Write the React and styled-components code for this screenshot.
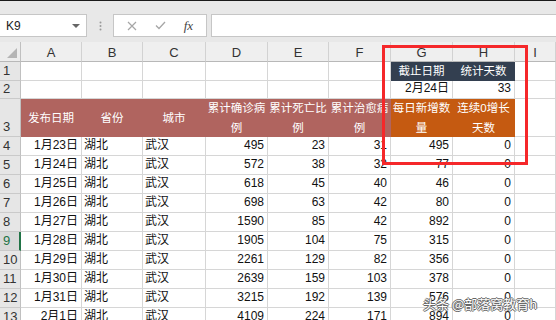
import React from "react";
import styled, { createGlobalStyle } from "styled-components";

const GlobalStyle = createGlobalStyle`
  html, body {
    margin: 0;
    padding: 0;
    background: #fff;
  }
  body {
    font-family: "Liberation Sans", "Noto Sans CJK SC", sans-serif;
  }
`;

const PINK = "#b0645f";
const NAVY = "#333f50";
const ORANGE = "#c55a11";

const COLUMNS = ["A", "B", "C", "D", "E", "F", "G", "H", "I"];

const DATA = [
  ["1月23日", "湖北", "武汉", 495, 23, 31, 495, 0],
  ["1月24日", "湖北", "武汉", 572, 38, 32, 77, 0],
  ["1月25日", "湖北", "武汉", 618, 45, 40, 46, 0],
  ["1月26日", "湖北", "武汉", 698, 63, 42, 80, 0],
  ["1月27日", "湖北", "武汉", 1590, 85, 42, 892, 0],
  ["1月28日", "湖北", "武汉", 1905, 104, 75, 315, 0],
  ["1月29日", "湖北", "武汉", 2261, 129, 82, 356, 0],
  ["1月30日", "湖北", "武汉", 2639, 159, 103, 378, 0],
  ["1月31日", "湖北", "武汉", 3215, 192, 139, 576, 0],
  ["2月1日", "湖北", "武汉", 4109, 224, 171, 894, 0],
];

const HEADERS = [
  { lines: ["发布日期"], fill: PINK },
  { lines: ["省份"], fill: PINK },
  { lines: ["城市"], fill: PINK },
  { lines: ["累计确诊病", "例"], fill: PINK },
  { lines: ["累计死亡比", "例"], fill: PINK },
  { lines: ["累计治愈病", "例"], fill: PINK },
  { lines: ["每日新增数", "量"], fill: ORANGE },
  { lines: ["连续0增长", "天数"], fill: ORANGE },
];

const Screen = styled.div`
  position: relative;
  width: 556px;
  height: 320px;
  overflow: hidden;
  background: #e8e8e8;
  border-top: 1px solid #1a1a1a;
  box-sizing: border-box;
`;

/* formula bar */
const FormulaBar = styled.div`
  display: flex;
  align-items: stretch;
  height: 23px;
  margin: 13px 0 5px;
`;

const NameBox = styled.div`
  width: 87px;
  box-sizing: border-box;
  background: #fff;
  border: 1px solid #c6c6c6;
  border-left: none;
  display: flex;
  align-items: center;
  padding-left: 6px;
  font-size: 12px;
  color: #222;
`;

const Caret = styled.span`
  margin-left: auto;
  margin-right: 6px;
  width: 0;
  height: 0;
  border-left: 4px solid transparent;
  border-right: 4px solid transparent;
  border-top: 4px solid #666;
`;

const Grip = styled.div`
  width: 26px;
  display: flex;
  align-items: center;
  justify-content: center;
`;

const FxGroup = styled.div`
  width: 94px;
  box-sizing: border-box;
  background: #fff;
  border: 1px solid #c6c6c6;
  display: flex;
  align-items: center;
  justify-content: space-around;
  padding: 0 4px;
`;

const FxLabel = styled.span`
  font-family: "Liberation Serif", serif;
  font-style: italic;
  font-size: 13px;
  color: #444;
`;

const FormulaInput = styled.div`
  flex: 1;
  margin-left: 4px;
  background: #fff;
  border: 1px solid #c6c6c6;
  border-right: none;
`;

/* sheet */
const Sheet = styled.div`
  display: grid;
  grid-template-columns: 21px 61px 61px 63px 62px 61px 62px 62px 62px 1fr;
  grid-template-rows: 20px 19px 18px 38px repeat(10, 19px);
  background: #fff;
`;

const Corner = styled.div`
  background: #ededed;
  border-right: 1px solid #c0c0c0;
  border-bottom: 1px solid #b8b8b8;
  display: flex;
  align-items: flex-end;
  justify-content: flex-end;
  padding: 0 3px 3px 0;
`;

const ColHead = styled.div`
  box-sizing: border-box;
  background: #efefef;
  border-right: 1px solid #d2d2d2;
  border-bottom: 1px solid #b8b8b8;
  display: flex;
  align-items: flex-end;
  justify-content: center;
  padding-bottom: 1px;
  font-size: 13px;
  color: #333;
`;

const RowHead = styled.div`
  box-sizing: border-box;
  background: ${(p) => (p.$active ? "#d9d9d9" : "#e6e6e6")};
  border-bottom: 1px solid #cacaca;
  border-right: ${(p) => (p.$active ? "2px solid #217346" : "1px solid #c0c0c0")};
  color: ${(p) => (p.$active ? "#217346" : "#333")};
  display: flex;
  align-items: flex-end;
  padding: 0 0 1px 3px;
  font-size: 13px;
  line-height: 16px;
`;

const Cell = styled.div`
  box-sizing: border-box;
  min-width: 0;
  background: ${(p) => p.$fill || "#fff"};
  border-right: 1px solid ${(p) => p.$fill || "#d6d6d6"};
  border-bottom: 1px solid ${(p) => p.$fill || "#d6d6d6"};
  color: ${(p) => (p.$fill ? "#fff" : "#111")};
  display: flex;
  flex-direction: column;
  justify-content: ${(p) => (p.$middle ? "center" : "flex-end")};
  align-items: ${(p) =>
    p.$align === "right" ? "flex-end" : p.$align === "center" ? "center" : "flex-start"};
  padding: ${(p) => (p.$middle ? "0" : "0 3px 1px 2px")};
  font-size: ${(p) => (p.$middle ? "11.5px" : "12px")};
  line-height: ${(p) => (p.$middle ? "20px" : "17px")};
  white-space: nowrap;
  overflow: hidden;
`;

const Highlight = styled.div`
  position: absolute;
  left: 382px;
  top: 44px;
  width: 146px;
  height: 120px;
  box-sizing: border-box;
  border: 3px solid #f5282a;
  pointer-events: none;
`;

const Watermark = styled.div`
  position: absolute;
  left: 423px;
  top: 293px;
  font-family: "Noto Sans CJK SC", sans-serif;
  font-size: 13px;
  color: #fff;
  text-shadow: 1px 0 0 #666, -1px 0 0 #666, 0 1px 0 #666, 0 -1px 0 #666;
  white-space: nowrap;
`;

const CrossIcon = () => (
  <svg width="10" height="10" viewBox="0 0 10 10">
    <path d="M1 1L9 9M9 1L1 9" stroke="#a6a6a6" strokeWidth="1.2" fill="none" />
  </svg>
);

const CheckIcon = () => (
  <svg width="11" height="9" viewBox="0 0 11 9">
    <path d="M1 4.5L4 7.5L10 1" stroke="#a6a6a6" strokeWidth="1.3" fill="none" />
  </svg>
);

const GripDots = () => (
  <svg width="3" height="10" viewBox="0 0 3 10">
    <circle cx="1.5" cy="1.5" r="1" fill="#9a9a9a" />
    <circle cx="1.5" cy="5" r="1" fill="#9a9a9a" />
    <circle cx="1.5" cy="8.5" r="1" fill="#9a9a9a" />
  </svg>
);

const CornerMark = () => (
  <svg width="10" height="10" viewBox="0 0 10 10">
    <polygon points="10,0 10,10 0,10" fill="#b5b5b5" />
  </svg>
);

const emptyRow = (n) => Array.from({ length: n }, (_, i) => <Cell key={i} />);

export default function App() {
  return (
    <Screen>
      <GlobalStyle />
      <FormulaBar>
        <NameBox>
          K9
          <Caret />
        </NameBox>
        <Grip>
          <GripDots />
        </Grip>
        <FxGroup>
          <CrossIcon />
          <CheckIcon />
          <FxLabel>fx</FxLabel>
        </FxGroup>
        <FormulaInput />
      </FormulaBar>

      <Sheet>
        <Corner>
          <CornerMark />
        </Corner>
        {COLUMNS.map((c) => (
          <ColHead key={c}>{c}</ColHead>
        ))}

        <RowHead>1</RowHead>
        {emptyRow(6)}
        <Cell $fill={NAVY} $middle $align="center">截止日期</Cell>
        <Cell $fill={NAVY} $middle $align="center">统计天数</Cell>
        <Cell />

        <RowHead>2</RowHead>
        {emptyRow(6)}
        <Cell $align="right">2月24日</Cell>
        <Cell $align="right">33</Cell>
        <Cell />

        <RowHead>3</RowHead>
        {HEADERS.map((h, i) => (
          <Cell key={i} $fill={h.fill} $middle $align="center">
            {h.lines.map((l) => (
              <span key={l}>{l}</span>
            ))}
          </Cell>
        ))}
        <Cell />

        {DATA.map((row, r) => (
          <React.Fragment key={r}>
            <RowHead $active={r + 4 === 9}>{r + 4}</RowHead>
            {row.map((v, i) => (
              <Cell key={i} $align={typeof v === "number" || i === 0 ? "right" : "left"}>
                {v}
              </Cell>
            ))}
            <Cell />
          </React.Fragment>
        ))}
      </Sheet>

      <Highlight />
      <Watermark>头条 @部落窝教育h</Watermark>
    </Screen>
  );
}
